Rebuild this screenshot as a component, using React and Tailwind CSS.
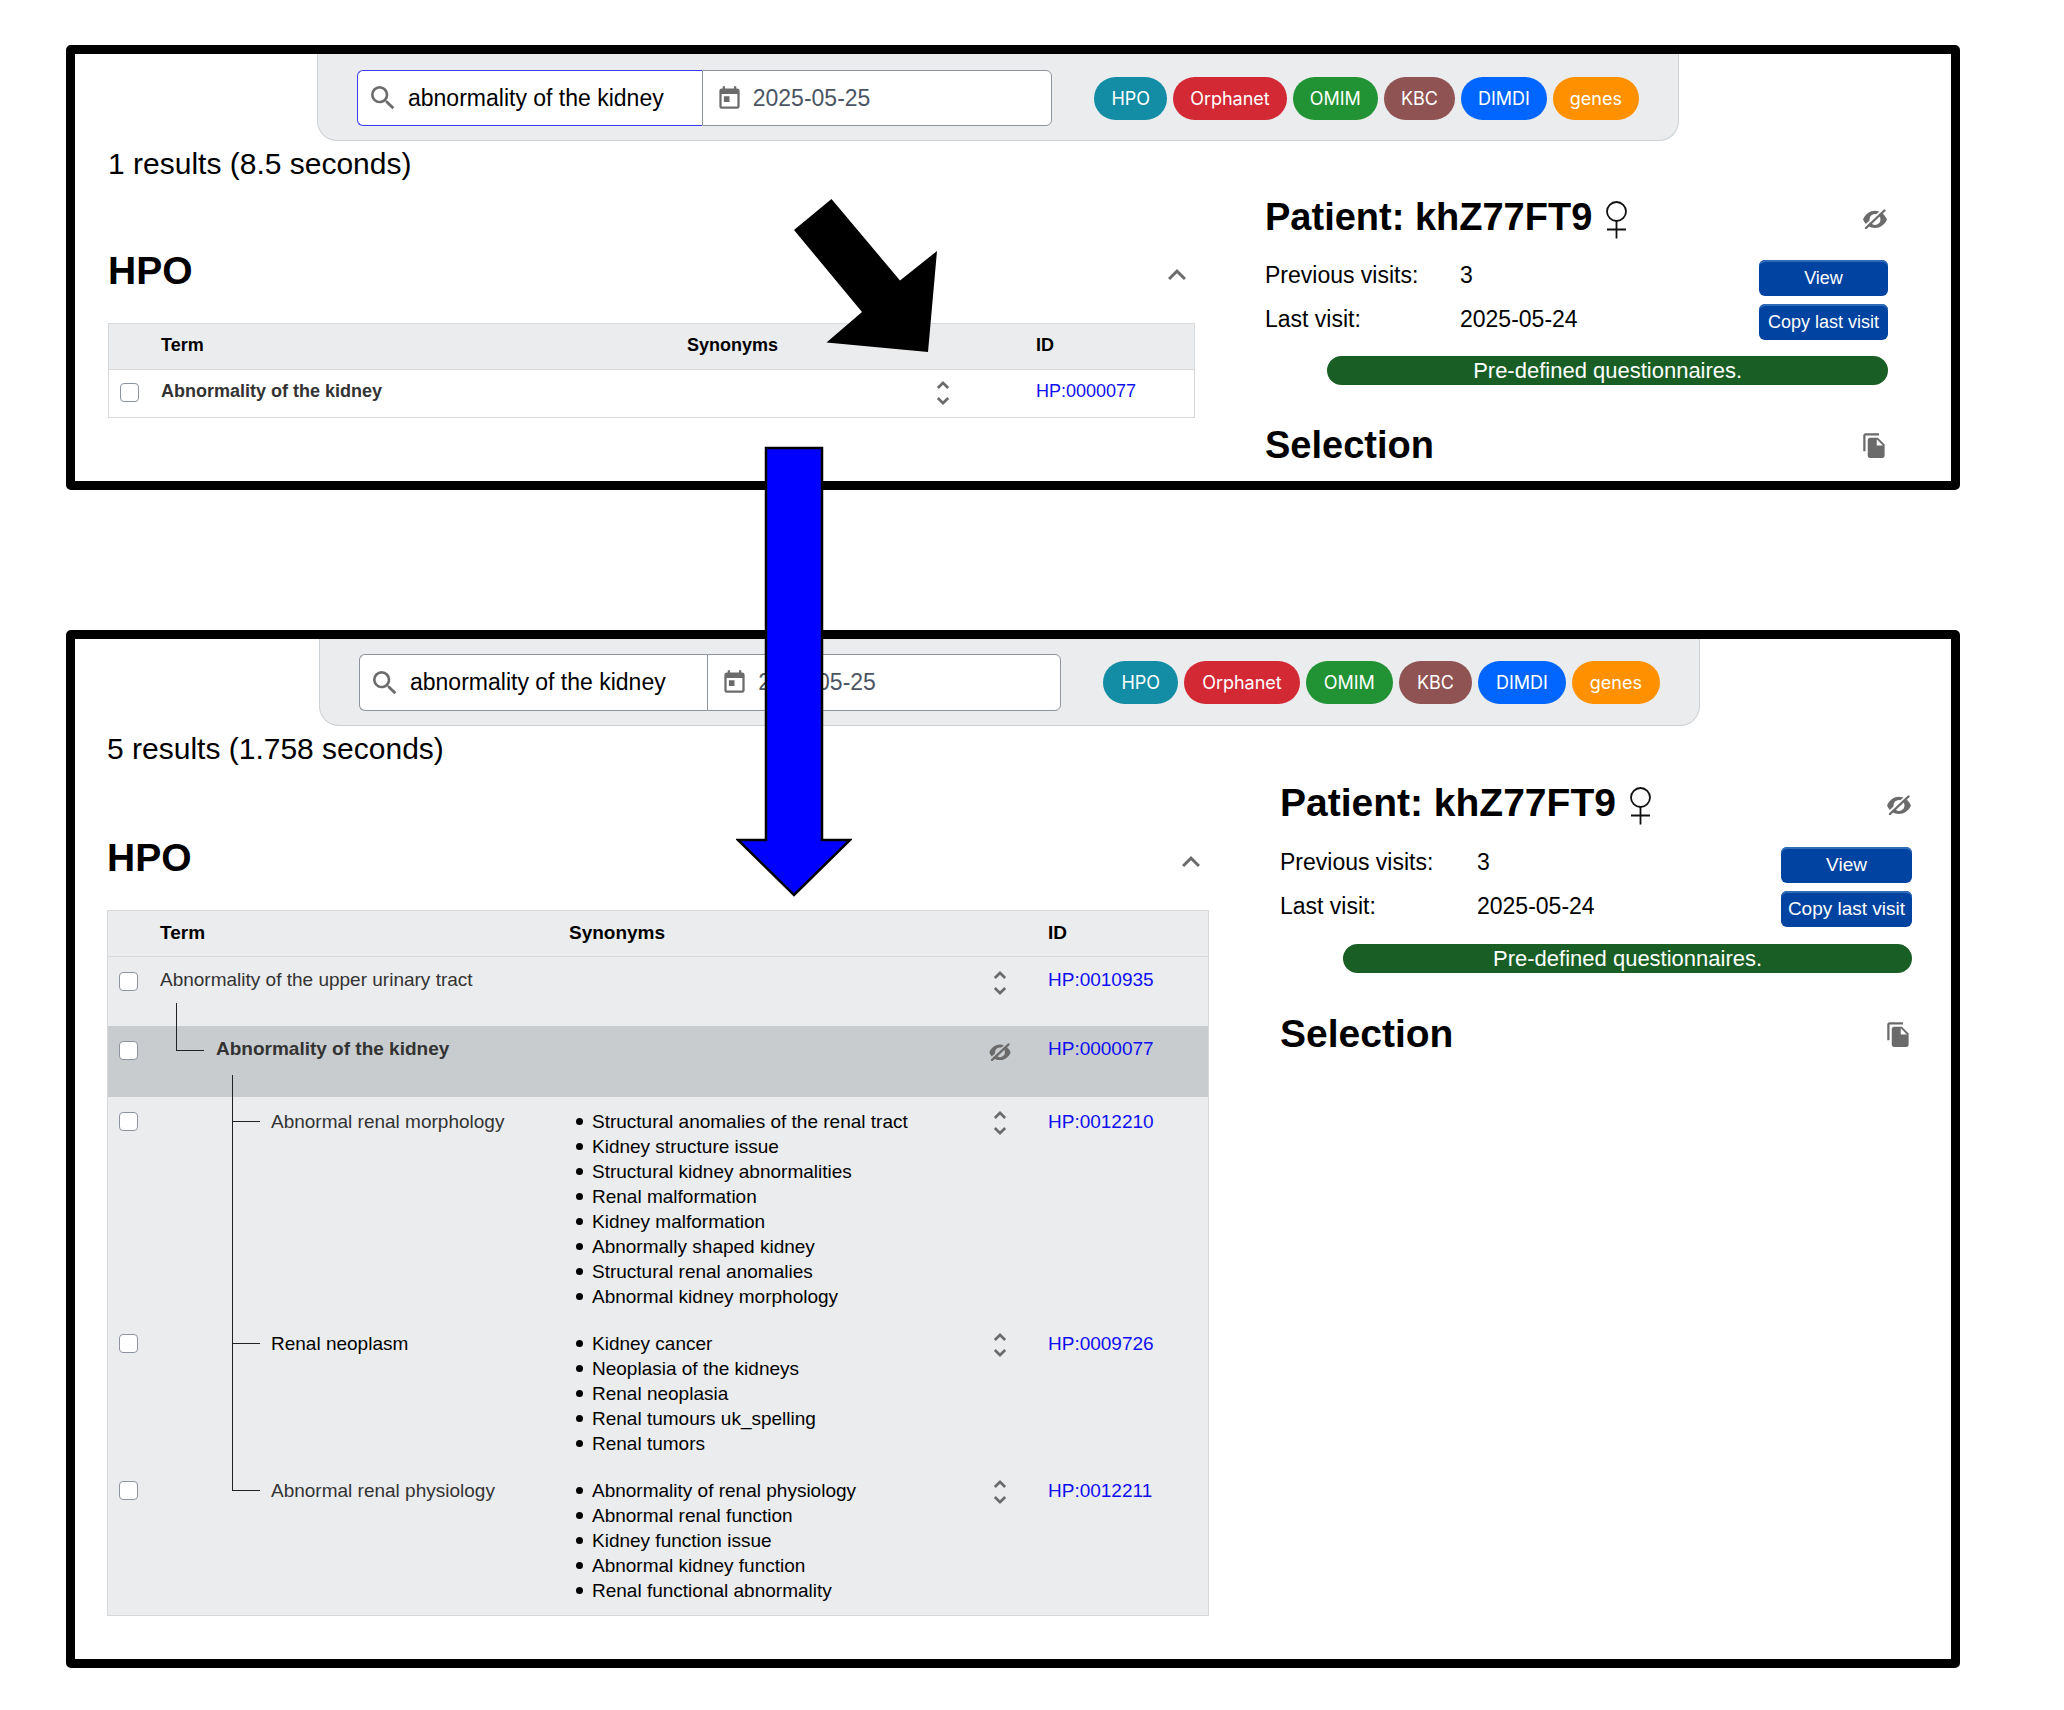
import React, { useId } from "react";

const CHIPS = [
  { label: "HPO", color: "bg-[#128da5]" },
  { label: "Orphanet", color: "bg-[#d32935]" },
  { label: "OMIM", color: "bg-[#219334]" },
  { label: "KBC", color: "bg-[#8f5353]" },
  { label: "DIMDI", color: "bg-[#0066ff]" },
  { label: "genes", color: "bg-[#ff9100]" },
];

const FIRST = {
  id: "before",
  results: "1 results (8.5 seconds)",
  frame: "pb-[14px]",
  bar: "ml-[242px] mr-[272px] pt-4",
  group: "h-14",
  chips: "gap-[6px]",
  chip: "px-[17px]",
  search: "border-[#3a3df0]",
  content: "pl-[33px] pr-[63px]",
  columns: "grid-cols-[1087fr_623fr] gap-x-[70px]",
  heading: "text-[38px]",
  leftTop: "pt-[65px]",
  rightTop: "pt-[13px]",
  visitLabel: "w-[195px]",
  visitButton: "w-[129px]",
  visitsTop: "mt-[21px]",
  bannerTop: "mt-4",
  selectionTop: "mt-[38px]",
  termCol: "w-[526px]",
  sortCol: "w-[109px]",
  idCol: "w-[158px]",
  text: "text-[18px]",
  boxTop: "pt-[13px]",
  iconTop: "pt-[7px]",
  body: "bg-white",
  rows: [
    { term: "Abnormality of the kidney", bold: true, id: "HP:0000077", height: "h-[48px]", top: "pt-[9px]", tone: "text-[#333]" },
  ],
};

const SECOND = {
  id: "after",
  results: "5 results (1.758 seconds)",
  frame: "pb-[43px]",
  bar: "ml-[244px] mr-[251px] pt-[15px]",
  group: "h-[57px]",
  chips: "gap-[6px]",
  chip: "px-[18px]",
  search: "border-[#8d949c]",
  content: "pl-8 pr-[39px]",
  columns: "grid-cols-[1102fr_632fr] gap-x-[71px]",
  heading: "text-[39px]",
  leftTop: "pt-[67px]",
  rightTop: "pt-[14px]",
  visitLabel: "w-[197px]",
  visitButton: "w-[131px]",
  visitsTop: "mt-[22px]",
  bannerTop: "mt-[17px]",
  selectionTop: "mt-[39px]",
  termCol: "w-[409px]",
  sortCol: "w-[64px]",
  idCol: "w-[160px]",
  text: "text-[19px]",
  boxTop: "pt-[15px]",
  iconTop: "pt-[10px]",
  body: "bg-[#ebecee]",
  rows: [
    { term: "Abnormality of the upper urinary tract", id: "HP:0010935", height: "h-[70px]", top: "pt-[10px]", tone: "text-[#333]", tree: "root" },
    { term: "Abnormality of the kidney", bold: true, selected: true, id: "HP:0000077", height: "h-[71px]", top: "pt-[10px]", tone: "text-[#333]", tree: "middle", indent: "pl-[56px]" },
    {
      term: "Abnormal renal morphology", id: "HP:0012210", height: "h-[222px]", top: "pt-3", tone: "text-[#333]", tree: "leaf", indent: "pl-[111px]",
      synonyms: ["Structural anomalies of the renal tract", "Kidney structure issue", "Structural kidney abnormalities", "Renal malformation", "Kidney malformation", "Abnormally shaped kidney", "Structural renal anomalies", "Abnormal kidney morphology"],
    },
    {
      term: "Renal neoplasm", id: "HP:0009726", height: "h-[147px]", top: "pt-3", tone: "text-black", tree: "leaf", indent: "pl-[111px]",
      synonyms: ["Kidney cancer", "Neoplasia of the kidneys", "Renal neoplasia", "Renal tumours uk_spelling", "Renal tumors"],
    },
    {
      term: "Abnormal renal physiology", id: "HP:0012211", height: "h-[149px]", top: "pt-3", tone: "text-[#333]", tree: "last", indent: "pl-[111px]",
      synonyms: ["Abnormality of renal physiology", "Abnormal renal function", "Kidney function issue", "Abnormal kidney function", "Renal functional abnormality"],
    },
  ],
};

function Glyph({ d, className }) {
  return (
    <svg viewBox="0 0 24 24" className={`shrink-0 ${className}`} fill="currentColor" aria-hidden="true">
      <path d={d} />
    </svg>
  );
}

const SEARCH = "M15.5 14h-.79l-.28-.27A6.471 6.471 0 0 0 16 9.5 6.5 6.5 0 1 0 9.5 16c1.61 0 3.09-.59 4.23-1.57l.27.28v.79l5 4.99L20.49 19l-4.99-5zm-6 0C7.01 14 5 11.99 5 9.5S7.01 5 9.5 5 14 7.01 14 9.5 11.99 14 9.5 14z";
const TODAY = "M19 3h-1V1h-2v2H8V1H6v2H5c-1.11 0-1.99.9-1.99 2L3 19a2 2 0 0 0 2 2h14c1.1 0 2-.9 2-2V5c0-1.1-.9-2-2-2zm0 16H5V8h14v11zM7 10h5v5H7z";
const CHEVRON_UP = "M12 8l-6 6 1.41 1.41L12 10.83l4.59 4.58L18 14z";
const UNFOLD = "M12 5.83L15.17 9l1.41-1.41L12 3 7.41 7.59 8.83 9 12 5.83zm0 12.34L8.83 15l-1.41 1.41L12 21l4.59-4.59L15.17 15 12 18.17z";
const COPY = "M16 1H4c-1.1 0-2 .9-2 2v14h2V3h12V1zm-1 4l6 6v10c0 1.1-.9 2-2 2H7.99C6.89 23 6 22.1 6 21l.01-14c0-1.1.89-2 1.99-2h7zm-1 7h5.5L14 6.5V12z";

function EyeOff({ className }) {
  const id = useId();
  return (
    <svg viewBox="0 0 24 20" className={`shrink-0 ${className}`} aria-hidden="true">
      <mask id={id}>
        <rect width="24" height="20" fill="#fff" />
        <path d="M0.500 18.500 20.500 0" stroke="#000" strokeWidth="2" />
      </mask>
      <path
        mask={`url(#${id})`}
        fill="currentColor"
        fillRule="evenodd"
        d="M0 10.500C2.500 5 7 1.800 12 1.800S21.500 5 24 10.500C21.500 16 17 19 12 19S2.500 16 0 10.500zM6.500 10.400a5.500 5.500 0 1 0 11 0a5.500 5.500 0 1 0-11 0z"
      />
      <path d="M3 19 21.500 1.500" stroke="currentColor" strokeWidth="2.400" strokeLinecap="round" />
    </svg>
  );
}

function SearchBar({ v }) {
  return (
    <div className={`flex h-[87px] items-start rounded-b-[20px] border border-t-0 border-[#ccd1d5] bg-[#ebecee] pl-[39px] pr-[39px] ${v.bar}`}>
      <div className={`flex min-w-0 flex-1 ${v.group}`}>
        <label className={`flex min-w-0 flex-1 items-center gap-[9px] rounded-l-md border border-r-0 bg-white pl-[9px] ${v.search}`}>
          <Glyph d={SEARCH} className="size-8 text-[#6b6b6b]" />
          <input type="text" aria-label="Search term" defaultValue="abnormality of the kidney" className="w-full min-w-0 bg-transparent text-[23px] text-black outline-none" />
        </label>
        <label className="flex min-w-0 flex-1 items-center gap-[10px] rounded-r-md border border-[#8d949c] bg-white pl-[13px]">
          <Glyph d={TODAY} className="size-[27px] text-[#6b6b6b]" />
          <input type="text" aria-label="Visit date" defaultValue="2025-05-25" className="w-full min-w-0 bg-transparent text-[23px] text-[#4b5563] outline-none" />
        </label>
      </div>
      <div className={`ml-[43px] flex items-center ${v.chips} ${v.group}`}>
        {CHIPS.map((c) => (
          <button key={c.label} type="button" className={`h-[43px] rounded-full font-[Inter,sans-serif] text-[18px] text-white ${v.chip} ${c.color}`}>
            {c.label}
          </button>
        ))}
      </div>
    </div>
  );
}

function TreeLines({ kind }) {
  const line = "absolute border-[#222]";
  if (kind === "root") return <span className={`${line} bottom-0 left-4 top-[46px] border-l`} />;
  if (kind === "middle")
    return (
      <>
        <span className={`${line} left-4 top-0 h-[25px] w-7 border-b border-l`} />
        <span className={`${line} bottom-0 left-[72px] top-[49px] border-l`} />
      </>
    );
  if (kind === "leaf")
    return (
      <>
        <span className={`${line} inset-y-0 left-[72px] border-l`} />
        <span className={`${line} left-[72px] top-0 h-[25px] w-7 border-b`} />
      </>
    );
  if (kind === "last") return <span className={`${line} left-[72px] top-0 h-[25px] w-7 border-b border-l`} />;
  return null;
}

function ResultsTable({ v }) {
  return (
    <div className="mt-7 border border-[#d5d9dc]">
      <table className={`w-full table-fixed border-collapse text-left leading-[25px] ${v.text}`}>
        <colgroup>
          <col className="w-[52px]" />
          <col className={v.termCol} />
          <col />
          <col className={v.sortCol} />
          <col className={v.idCol} />
        </colgroup>
        <thead>
          <tr className="h-[45px] border-b border-[#d5d9dc] bg-[#ebecee] text-black">
            <th />
            <th className="pb-[2px] font-bold">Term</th>
            <th className="pb-[2px] font-bold">Synonyms</th>
            <th />
            <th className="pb-[2px] font-bold">ID</th>
          </tr>
        </thead>
        <tbody>
          {v.rows.map((r) => (
            <tr key={r.id} className={`align-top ${r.height} ${r.selected ? "bg-[#c8cccf]" : v.body}`}>
              <td className={`pl-[11px] ${v.boxTop}`}>
                <input type="checkbox" aria-label={`Select ${r.term}`} className="block size-[19px] appearance-none rounded-[4px] border border-[#8d949f] bg-white" />
              </td>
              <td className={`relative ${r.top} ${r.indent || ""} ${r.tone} ${r.bold ? "font-bold" : ""}`}>
                <TreeLines kind={r.tree} />
                {r.term}
              </td>
              <td className={`text-black ${r.top}`}>
                {r.synonyms && (
                  <ul className="pl-[7px]">
                    {r.synonyms.map((s) => (
                      <li key={s} className="flex items-center gap-[9px] before:size-[7px] before:rounded-full before:bg-black">
                        {s}
                      </li>
                    ))}
                  </ul>
                )}
              </td>
              <td className={v.iconTop}>
                <button type="button" aria-label={r.selected ? "Hide hierarchy" : "Show hierarchy"} className="flex size-8 items-center justify-center text-[#6b6b6b]">
                  {r.selected ? <EyeOff className="h-[18px] w-[22px]" /> : <Glyph d={UNFOLD} className="size-8" />}
                </button>
              </td>
              <td className={r.top}>
                <a href={`#${r.id}`} className="text-[#0f0ff0]">{r.id}</a>
              </td>
            </tr>
          ))}
        </tbody>
      </table>
    </div>
  );
}

function PatientPanel({ v }) {
  const button = "h-9 whitespace-nowrap rounded-md bg-[#0043a0] text-white shadow-[inset_0_2px_0_#2f6cb8]";
  return (
    <section className={v.rightTop}>
      <div className="flex items-center justify-between">
        <div className="flex items-center gap-[14px]">
          <h2 className={`font-bold leading-[44px] ${v.heading}`}>Patient: khZ77FT9</h2>
          <svg viewBox="0 0 21 38" className="mt-[6px] h-[38px] w-[21px]" fill="none" stroke="#111" strokeWidth="1.8" role="img" aria-label="Female">
            <circle cx="10.5" cy="10.5" r="9.5" />
            <path d="M10.5 20v17.500M1 28.500h19" />
          </svg>
        </div>
        <button type="button" aria-label="Hide patient" className="mt-1 pr-px text-[#6b6b6b]">
          <EyeOff className="h-5 w-6" />
        </button>
      </div>
      <div className={`flex flex-col gap-2 text-[23px] leading-[30px] ${v.visitsTop}`}>
        <div className="flex h-9 items-start">
          <span className={v.visitLabel}>Previous visits:</span>
          <span className="flex-1">3</span>
          <button type="button" className={`${button} ${v.visitButton} ${v.text}`}>View</button>
        </div>
        <div className="flex h-9 items-start">
          <span className={v.visitLabel}>Last visit:</span>
          <span className="flex-1">2025-05-24</span>
          <button type="button" className={`${button} ${v.visitButton} ${v.text}`}>Copy last visit</button>
        </div>
      </div>
      <button type="button" className={`ml-auto block h-[29px] w-[90%] rounded-full bg-[#195f25] text-[22px] leading-[29px] text-white ${v.bannerTop}`}>
        Pre-defined questionnaires.
      </button>
      <div className={`flex items-center justify-between ${v.selectionTop}`}>
        <h2 className={`font-bold leading-[44px] ${v.heading}`}>Selection</h2>
        <button type="button" aria-label="Copy selection" className="text-[#6b6b6b]">
          <Glyph d={COPY} className="size-[27px]" />
        </button>
      </div>
    </section>
  );
}

function Screen({ v }) {
  return (
    <section className={`rounded-[5px] border-[9px] border-black bg-white ${v.frame}`}>
      <SearchBar v={v} />
      <div className={v.content}>
        <p className="mt-[5px] text-[30px] leading-9">{v.results}</p>
        <div className={`grid items-start ${v.columns}`}>
          <section className={`min-w-0 ${v.leftTop}`}>
            <div className="flex items-center justify-between">
              <h2 className="text-[39px] font-bold leading-[48px]">HPO</h2>
              <button type="button" aria-label="Collapse HPO" className="mt-2 text-[#6b6b6b]">
                <Glyph d={CHEVRON_UP} className="size-9" />
              </button>
            </div>
            <ResultsTable v={v} />
          </section>
          <PatientPanel v={v} />
        </div>
      </div>
    </section>
  );
}

export default function App() {
  return (
    <main className="relative flex min-h-screen flex-col gap-[140px] bg-white pb-10 pl-[66px] pr-[104px] pt-[45px] font-['Liberation_Sans',Arial,sans-serif] text-black">
      <Screen v={FIRST} />
      <Screen v={SECOND} />
      <svg viewBox="0 0 144 154" className="pointer-events-none absolute left-[794px] top-[199px] h-[154px] w-[144px]" aria-hidden="true">
        <path d="M37.500 0 0 31l68 82-35.500 30.500L134 153l9-101-37 29.500z" fill="#000" />
      </svg>
      <svg viewBox="0 0 116 452" className="pointer-events-none absolute left-[736px] top-[446px] h-[452px] w-[116px]" aria-hidden="true">
        <path d="M30 2h56v392h28L58 449 2 394h28z" fill="#0000ff" stroke="#000" strokeWidth="2.500" />
      </svg>
    </main>
  );
}
